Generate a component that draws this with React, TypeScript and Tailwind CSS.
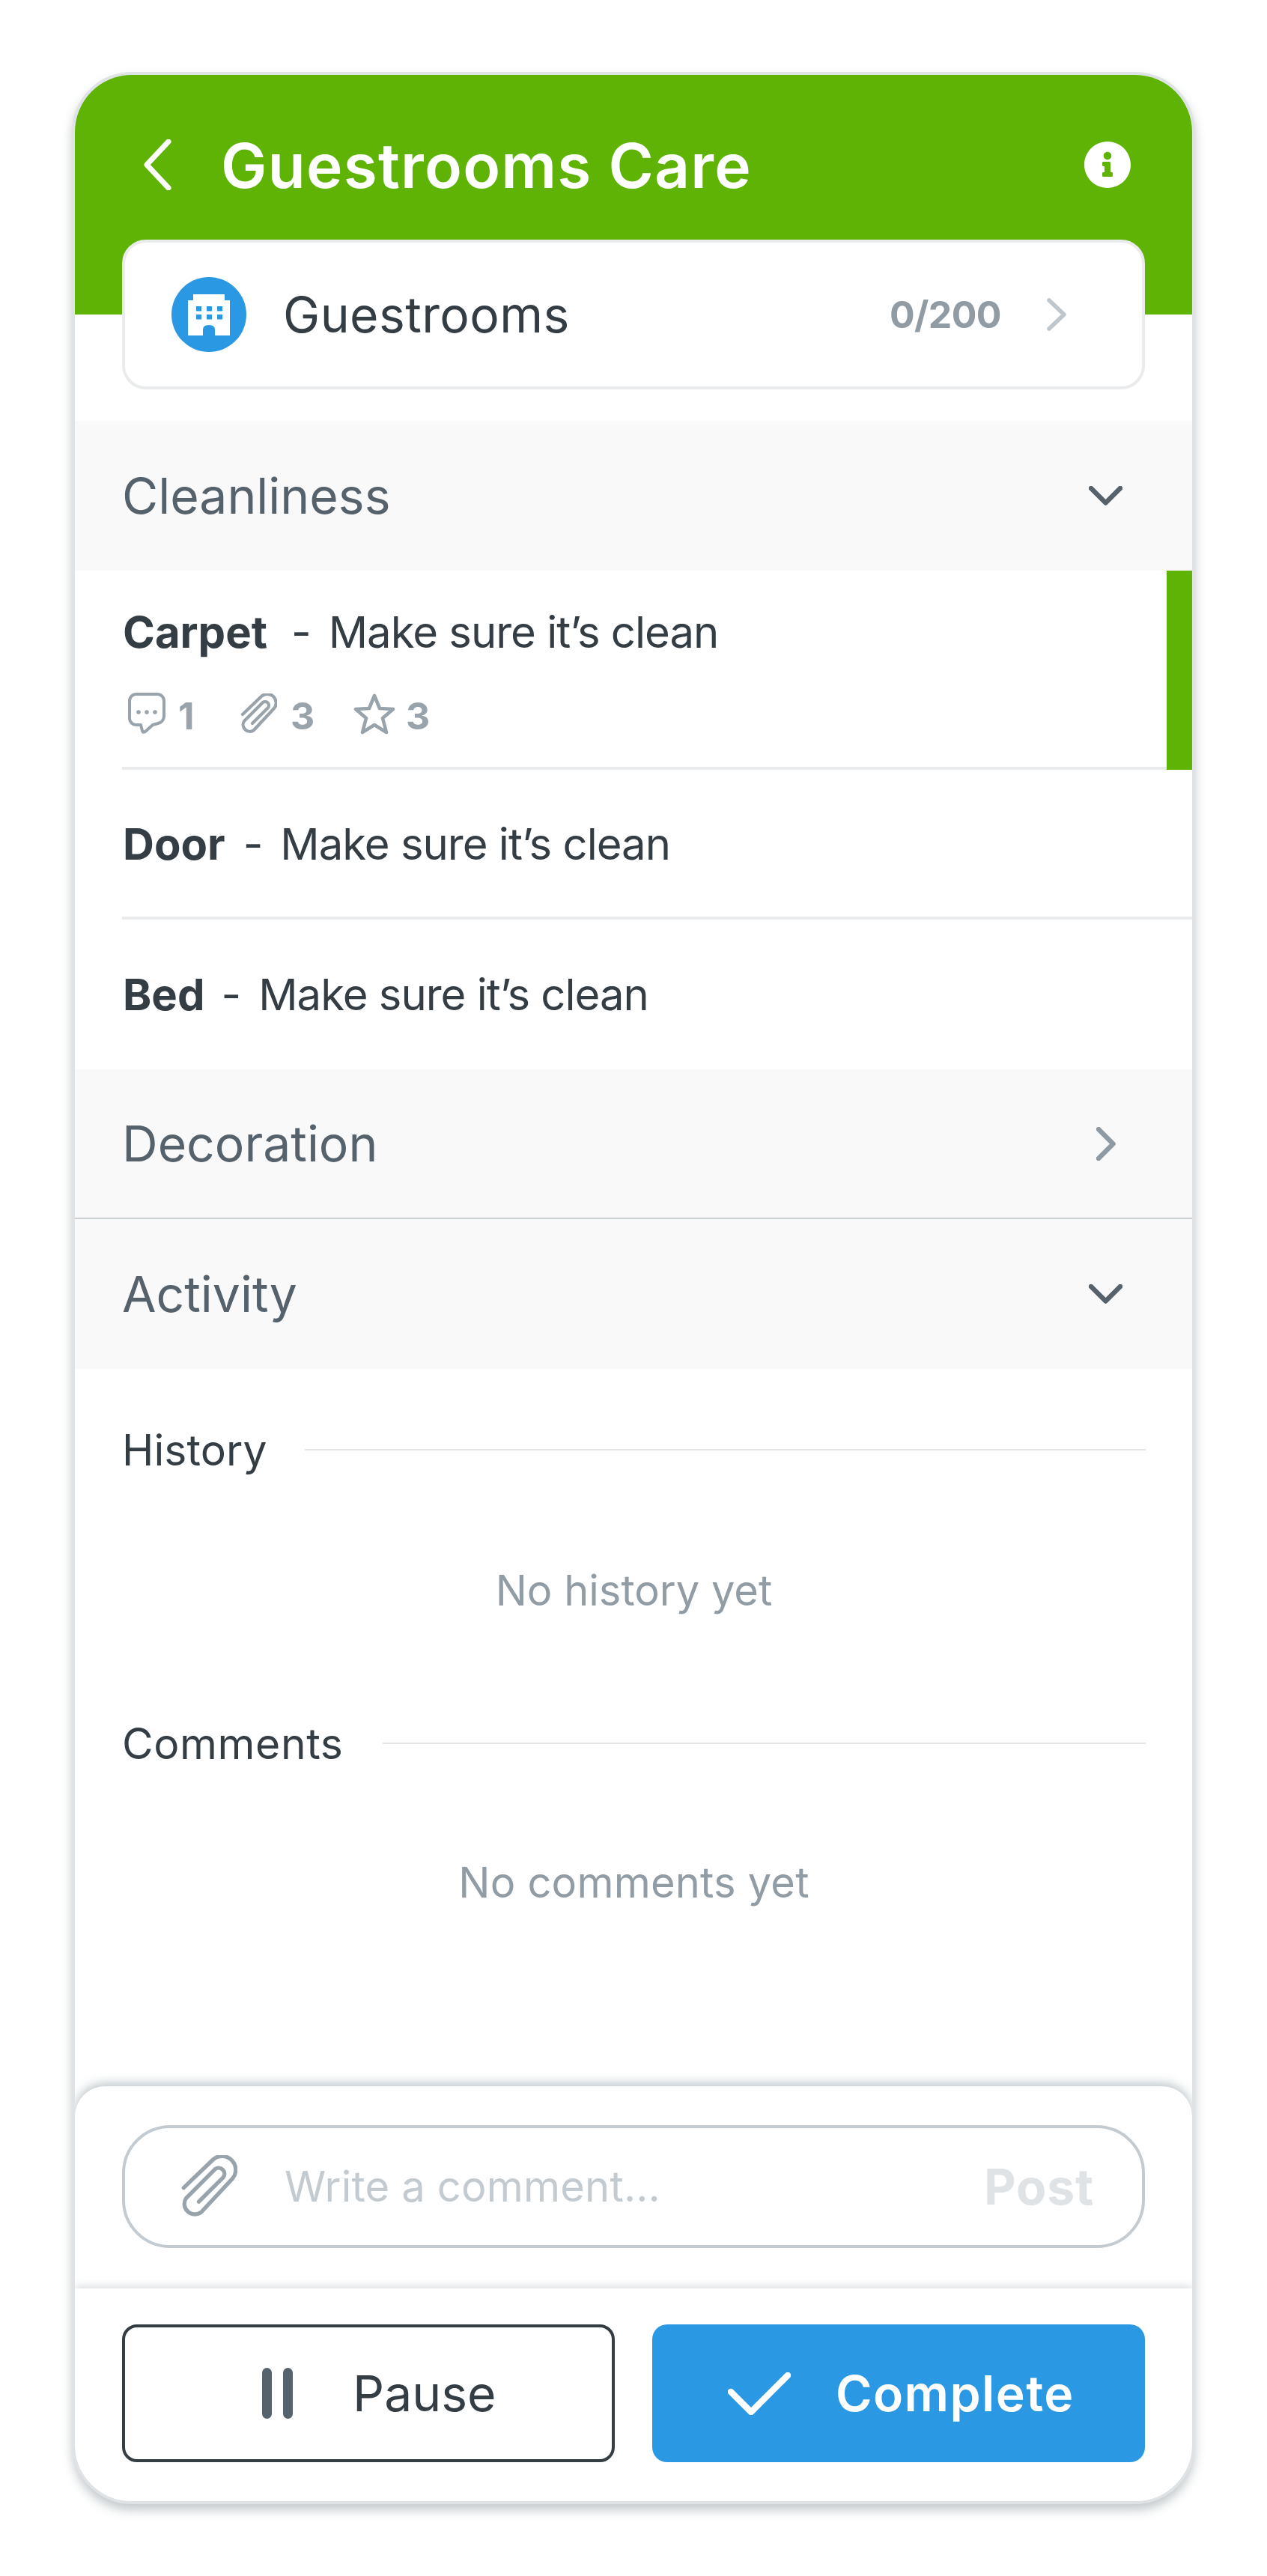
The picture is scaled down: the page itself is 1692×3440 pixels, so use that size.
import React from "react";
import { FaInfoCircle } from "react-icons/fa";

const Clip = ({ className, stroke, width = "3.8" }: { className: string; stroke: string; width?: string }) => (
  <svg viewBox="0 0 48 54" className={className} fill="none" stroke={stroke} strokeWidth={width} strokeLinecap="round" strokeLinejoin="round">
    <path d="M2 28 L27 4 A11.7 11.7 0 0 1 44 20 L17 49 A9 9 0 0 1 4 37 L29 12 A5 5 0 0 1 36 19 L15 40" />
  </svg>
);

const Down = () => (
  <svg viewBox="0 0 45 26" className="w-[45px] h-[26px]" fill="none" stroke="#55616b" strokeWidth="6.5" strokeLinecap="round" strokeLinejoin="round">
    <path d="M3 3 L22.5 22.5 L42 3" />
  </svg>
);

const Section = ({ title, open, line }: { title: string; open?: boolean; line?: boolean }) => (
  <div className={`h-[200px] shrink-0 bg-[#f9f9fa] pl-[63px] pr-[93px] flex items-center justify-between ${line ? "border-b-2 border-[#c8d0d4]" : ""}`}>
    <span className="text-[66px] leading-none text-[#55616b]">{title}</span>
    {open ? (
      <Down />
    ) : (
      <div className="w-[45px] flex justify-center">
        <svg viewBox="0 0 26 45" className="w-[26px] h-[45px]" fill="none" stroke="#8f9aa3" strokeWidth="6.5" strokeLinecap="round" strokeLinejoin="round">
          <path d="M3 3 L22.5 22.5 L3 42" />
        </svg>
      </div>
    )}
  </div>
);

const RowText = ({ label, gap }: { label: string; gap: string }) => (
  <div className="flex items-center text-[58px] leading-none text-[#343c44]">
    <span className="font-bold ml-[1px]">{label}</span>
    <span className={gap}>-</span>
    <span className="ml-[23px] tracking-[-1px]">Make sure it’s clean</span>
  </div>
);

const Count = ({ n, className }: { n: string; className: string }) => (
  <span className={`text-[50px] leading-none font-bold text-[#99a3ab] ${className}`}>{n}</span>
);

const Divider = ({ title, gap, track }: { title: string; gap: string; track: string }) => (
  <div className={`h-[80px] flex items-center ${gap}`}>
    <span className={`text-[57px] leading-none text-[#343c44] ${track}`}>{title}</span>
    <div className="flex-1 h-[2px] bg-[#e3e6e8]" />
  </div>
);

export default function App() {
  return (
    <div className="w-[1692px] h-[3440px] bg-white pt-[96px] pl-[96px] font-['Inter','Noto_Sans',sans-serif]">
      <div className="w-[1500px] h-[3248px] border-4 border-[#dfe3e6] rounded-[80px] overflow-hidden bg-white flex flex-col shadow-[0_8px_14px_rgba(70,90,100,0.32)]">
        <div className="h-[320px] shrink-0 bg-[#5eb304]">
          <div className="h-[240px] pl-[92px] pr-[81px] flex items-center">
            <svg viewBox="0 0 37 68" className="w-[37px] h-[68px]" fill="none" stroke="#fff" strokeWidth="7" strokeLinecap="round" strokeLinejoin="round">
              <path d="M33 3 L4 34 L33 65" />
            </svg>
            <h1 className="ml-[66px] mt-[3px] text-[82px] leading-none font-semibold text-white tracking-[1.2px]">Guestrooms Care</h1>
            <FaInfoCircle className="ml-auto w-[64px] h-[64px] text-white" />
          </div>
        </div>

        <div className="relative -mt-[100px] mx-[63px] h-[200px] shrink-0 bg-white border-4 border-[#e9ebec] rounded-[32px] flex items-center pl-[62px] pr-[101px]">
          <div className="w-[100px] h-[100px] rounded-full bg-[#2a98e2] flex items-center justify-center">
            <svg viewBox="0 0 56 55" className="w-[56px] h-[55px]">
              <path fill="#fff" fillRule="evenodd" d="M7 0H49V8H56V55H36V47Q36 41 28 41Q20 41 20 47V55H0V8H7Z" />
              <g fill="#2a98e2">
                <rect x="11" y="16" width="7" height="6.5" />
                <rect x="25" y="16" width="7" height="6.5" />
                <rect x="39" y="16" width="7" height="6.5" />
                <rect x="11" y="27" width="7" height="6.5" />
                <rect x="25" y="27" width="7" height="6.5" />
                <rect x="39" y="27" width="7" height="6.5" />
              </g>
            </svg>
          </div>
          <span className="ml-[49px] text-[66px] leading-none text-[#343c44] tracking-[0.4px]">Guestrooms</span>
          <span className="ml-auto text-[50px] leading-none font-bold text-[#919ba3] tracking-[-0.6px] translate-x-[2px]">0/200</span>
          <svg viewBox="0 0 26 44" className="ml-[63px] w-[26px] h-[44px]" fill="none" stroke="#bfc7cd" strokeWidth="5.5" strokeLinecap="round" strokeLinejoin="round">
            <path d="M3 3 L23 22 L3 41" />
          </svg>
        </div>

        <div className="mt-[42px] shrink-0">
          <Section title="Cleanliness" open />
        </div>

        <div className="h-[266px] shrink-0 flex">
          <div className="flex-1 ml-[63px] border-b-4 border-[#e9ebec] pt-[53px]">
            <RowText label="Carpet" gap="ml-[32px]" />
            <div className="mt-[52px] flex items-center text-[#99a3ab]">
              <svg viewBox="0 0 50 56" className="ml-[8px] w-[50px] h-[56px]" fill="none" stroke="#99a3ab" strokeWidth="4" strokeLinejoin="round">
                <path d="M11 2H39A9 9 0 0 1 48 11V32A10 10 0 0 1 40 41L33 43L23 52Q20 54 19 51L17 43H11A9 9 0 0 1 2 34V11A9 9 0 0 1 11 2Z" />
                <g fill="#99a3ab" stroke="none">
                  <circle cx="14" cy="26" r="2.8" />
                  <circle cx="25" cy="26" r="2.8" />
                  <circle cx="36" cy="26" r="2.8" />
                </g>
              </svg>
              <Count n="1" className="ml-[17px] w-[18px] mt-[6px]" />
              <Clip className="ml-[66px] w-[48px] h-[54px]" stroke="#99a3ab" width="4.2" />
              <Count n="3" className="ml-[18px] w-[24px] mt-[6px]" />
              <svg viewBox="0 0 56 55" className="ml-[60px] w-[56px] h-[55px]" fill="none" stroke="#99a3ab" strokeWidth="4.6" strokeLinejoin="round">
                <path d="M28 3L35 20L53 21L39 33L44 52L28 42L12 52L17 33L3 21L21 20Z" />
              </svg>
              <Count n="3" className="ml-[14px] w-[24px] mt-[6px]" />
            </div>
          </div>
          <div className="w-[34px] bg-[#5eb304]" />
        </div>

        <div className="h-[200px] shrink-0 ml-[63px] border-b-4 border-[#e9ebec] flex items-center">
          <div className="mt-[2px]">
            <RowText label="Door" gap="ml-[24px]" />
          </div>
        </div>
        <div className="h-[200px] shrink-0 ml-[63px] flex items-center">
          <RowText label="Bed" gap="ml-[22px]" />
        </div>

        <Section title="Decoration" line />
        <Section title="Activity" open />

        <div className="flex-1 ml-[63px] mr-[62px] pt-[68px]">
          <Divider title="History" gap="gap-[50px]" track="tracking-[0.1px]" />
          <div className="h-[296px] flex items-center justify-center text-[56px] leading-none text-[#919ca5]">No history yet</div>
          <div className="mt-[16px]">
            <Divider title="Comments" gap="gap-[52px]" track="tracking-[0.6px]" />
          </div>
          <div className="h-[292px] flex items-center justify-center text-[56px] leading-none text-[#919ca5] tracking-[0.2px]">No comments yet</div>
        </div>

        <div className="relative h-[270px] shrink-0 bg-white rounded-t-[40px] shadow-[0_-4px_14px_rgba(80,100,110,0.38)] px-[63px] pt-[52px]">
          <div className="h-[164px] border-4 border-[#c3cbd1] rounded-[64px] flex items-center pl-[75px] pr-[64px]">
            <Clip className="w-[75px] h-[84px]" stroke="#99a3ab" width="3.4" />
            <span className="ml-[63px] text-[56px] leading-none text-[#c3cbd1] tracking-[0.2px]">Write a comment...</span>
            <span className="ml-auto text-[66px] leading-none font-bold text-[#dfe3e6] tracking-[0.8px]">Post</span>
          </div>
        </div>

        <div className="relative h-[284px] shrink-0 bg-white shadow-[0_-3px_10px_rgba(80,100,110,0.22)] px-[63px] pt-[48px] flex gap-[50px]">
          <div className="w-[658px] h-[184px] border-4 border-[#343c44] rounded-[20px] flex items-center pl-[183px]">
            <div className="flex gap-[15px]">
              <div className="w-[13px] h-[68px] rounded-full bg-[#56626c]" />
              <div className="w-[13px] h-[68px] rounded-full bg-[#56626c]" />
            </div>
            <span className="ml-[80px] text-[66px] leading-none text-[#343c44]">Pause</span>
          </div>
          <div className="w-[658px] h-[184px] bg-[#2a98e2] rounded-[20px] flex items-center pl-[101px]">
            <svg viewBox="0 0 84 57" className="w-[84px] h-[57px]" fill="none" stroke="#fff" strokeWidth="8.5" strokeLinecap="round" strokeLinejoin="round">
              <path d="M4 26L31 53L80 4" />
            </svg>
            <span className="ml-[60px] text-[66px] leading-none font-semibold text-white tracking-[1.4px]">Complete</span>
          </div>
        </div>
      </div>
    </div>
  );
}
